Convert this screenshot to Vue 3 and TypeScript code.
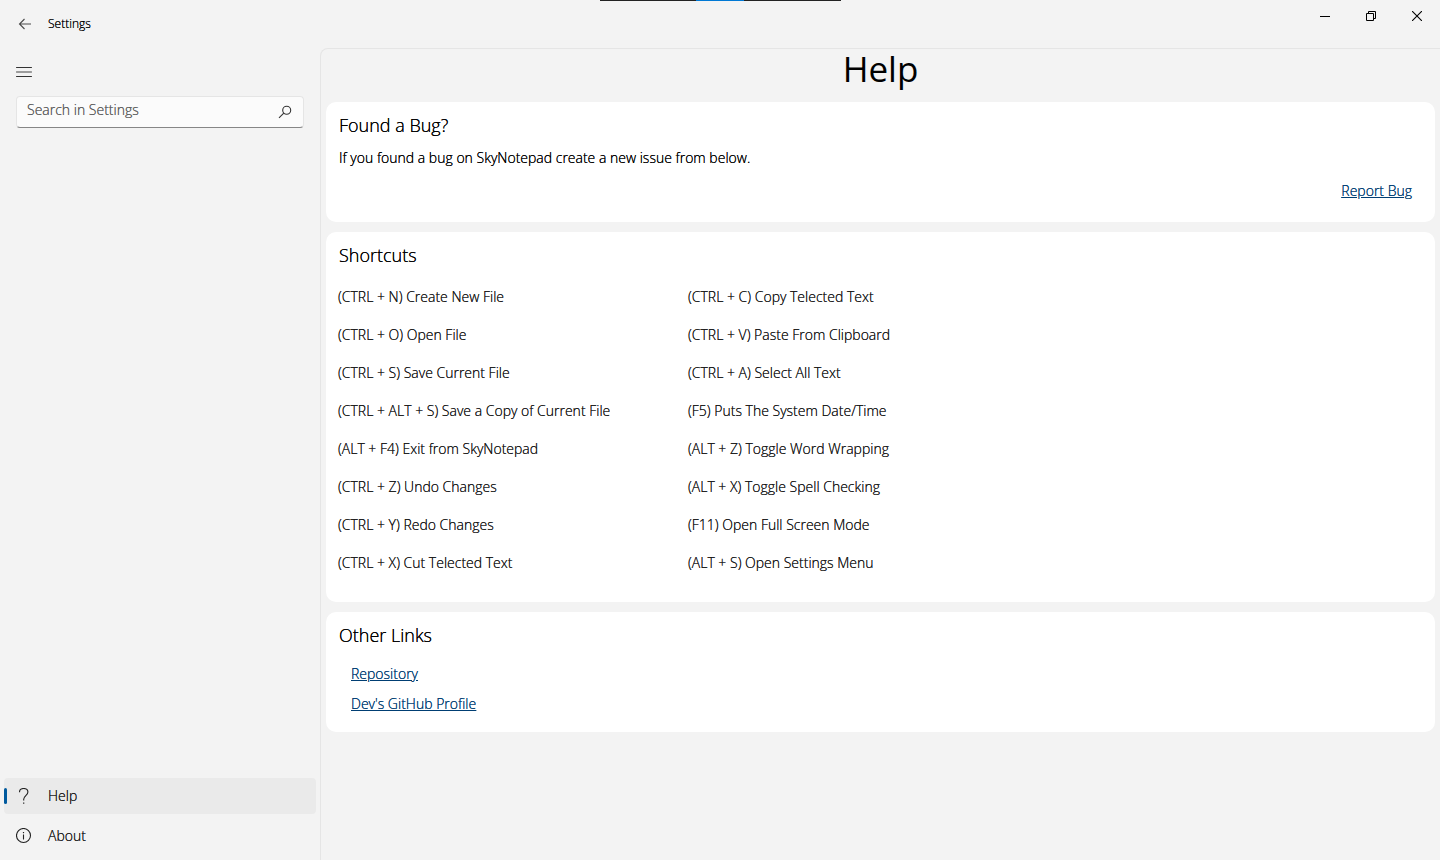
<script setup lang="ts">
import { ref } from 'vue'

const query = ref<string>('')

const leftShortcuts: string[] = [
  '(CTRL + N) Create New File',
  '(CTRL + O) Open File',
  '(CTRL + S) Save Current File',
  '(CTRL + ALT + S) Save a Copy of Current File',
  '(ALT + F4) Exit from SkyNotepad',
  '(CTRL + Z) Undo Changes',
  '(CTRL + Y) Redo Changes',
  '(CTRL + X) Cut Telected Text',
]

const rightShortcuts: string[] = [
  '(CTRL + C) Copy Telected Text',
  '(CTRL + V) Paste From Clipboard',
  '(CTRL + A) Select All Text',
  '(F5) Puts The System Date/Time',
  '(ALT + Z) Toggle Word Wrapping',
  '(ALT + X) Toggle Spell Checking',
  '(F11) Open Full Screen Mode',
  '(ALT + S) Open Settings Menu',
]

const links: string[] = ['Repository', "Dev's GitHub Profile"]
</script>

<template>
  <div class="window">
    <div class="drag-handle"><span class="drag-accent"></span></div>

    <header class="titlebar">
      <button class="back" type="button" aria-label="Back">
        <svg width="14" height="12" viewBox="0 0 14 12" fill="none" stroke="#4a4a4a" stroke-width="1.1">
          <path d="M13 6H1.5M6.5 1L1.5 6l5 5" />
        </svg>
      </button>
      <span class="app-title">Settings</span>
      <div class="controls">
        <button type="button" aria-label="Minimize">
          <svg width="10" height="10" viewBox="0 0 10 10"><path d="M0 5h10v1H0z" fill="#000" /></svg>
        </button>
        <button type="button" aria-label="Restore">
          <svg width="10" height="10" viewBox="0 0 10 10" fill="none" stroke="#000">
            <path d="M.5 2.5h7v7h-7zM2.5 2.5v-2h7v7h-2" />
          </svg>
        </button>
        <button type="button" aria-label="Close">
          <svg width="10" height="10" viewBox="0 0 10 10" fill="none" stroke="#000" stroke-width="1.1">
            <path d="M0 0l10 10M10 0L0 10" />
          </svg>
        </button>
      </div>
    </header>

    <div class="body">
      <aside class="sidebar">
        <button class="menu" type="button" aria-label="Toggle navigation">
          <svg width="16" height="12" viewBox="0 0 16 12" fill="none" stroke-linecap="round">
            <path d="M.5 1.5h15M.5 10.5h15" stroke="#333" />
            <path d="M.5 6h15" stroke="#444" />
          </svg>
        </button>
        <div class="search">
          <input v-model="query" type="text" placeholder="Search in Settings" aria-label="Search in Settings" />
          <button type="button" aria-label="Search">
            <svg width="14" height="14" viewBox="0 0 14 14" fill="none" stroke="#333" stroke-width="1.1">
              <circle cx="8.7" cy="5.2" r="4" />
              <path d="M5.8 8.1L1 12.9" />
            </svg>
          </button>
        </div>
        <nav class="nav">
          <button class="nav-item active" type="button" aria-current="page">
            <svg width="16" height="16" viewBox="0 0 16 16" fill="none" stroke="#222" stroke-width="1.1">
              <path d="M3.500 4.200C3.500 1.800 5.200.5 7.700.5s4.200 1.400 4.200 3.500c0 3.200-4.200 4-4.200 7.200v1.300" />
              <path d="M7.100 14.500h1.200v1.300H7.100z" fill="#222" stroke="none" />
            </svg>
            <span>Help</span>
          </button>
          <button class="nav-item" type="button">
            <svg width="16" height="16" viewBox="0 0 16 16" fill="none" stroke="#222" stroke-width="1.1">
              <circle cx="7.500" cy="7.500" r="7" />
              <path d="M7.500 6.500v5" />
              <path d="M6.900 4h1.200v1.200H6.900z" fill="#222" stroke="none" />
            </svg>
            <span>About</span>
          </button>
        </nav>
      </aside>

      <main class="content">
        <h1>Help</h1>

        <section class="card">
          <h2>Found a Bug?</h2>
          <p>If you found a bug on SkyNotepad create a new issue from below.</p>
          <div class="report"><a href="#">Report Bug</a></div>
        </section>

        <section class="card">
          <h2>Shortcuts</h2>
          <div class="columns">
            <ul>
              <li v-for="item in leftShortcuts" :key="item">{{ item }}</li>
            </ul>
            <ul>
              <li v-for="item in rightShortcuts" :key="item">{{ item }}</li>
            </ul>
          </div>
        </section>

        <section class="card">
          <h2>Other Links</h2>
          <ul class="links">
            <li v-for="item in links" :key="item"><a href="#">{{ item }}</a></li>
          </ul>
        </section>
      </main>
    </div>
  </div>
</template>

<style>
body {
  margin: 0;
  background: #f3f3f3;
}
</style>

<style scoped>
.window {
  position: relative;
  display: flex;
  flex-direction: column;
  min-height: 100vh;
  background: #f3f3f3;
  color: #000;
  font-family: "Segoe UI", "Open Sans", "Noto Sans", sans-serif;
  font-size: 14px;
  font-weight: 350;
  line-height: 20px;
  /* Firms up the thin strokes of the light face. */
  text-shadow: 0 0 0 currentColor;
}

button {
  display: flex;
  align-items: center;
  justify-content: center;
  padding: 0;
  border: 0;
  background: none;
  color: inherit;
  font: inherit;
  text-shadow: inherit;
}

ul {
  margin: 0;
  padding: 0;
  list-style: none;
}

.drag-handle {
  position: absolute;
  top: 0;
  left: 50%;
  display: flex;
  width: 241px;
  height: 1px;
  margin-left: -120px;
  background: #222;
}

.drag-accent {
  width: 48px;
  margin-left: 96px;
  background: #0078d4;
}

.titlebar {
  display: flex;
  align-items: center;
  height: 48px;
}

.back {
  width: 42px;
  height: 40px;
  margin-left: 4px;
}

.app-title {
  margin-left: 2px;
  font-size: 12px;
  line-height: 16px;
}

.controls {
  display: flex;
  align-self: flex-start;
  margin-left: auto;
}

.controls button {
  width: 46px;
  height: 32px;
}

.body {
  display: flex;
  flex: 1;
}

.sidebar {
  display: flex;
  flex-direction: column;
  flex: 0 0 320px;
}

.menu {
  width: 40px;
  height: 40px;
  margin: 4px 4px;
}

.search {
  box-sizing: border-box;
  display: flex;
  height: 32px;
  margin: 0 16px;
  border: 1px solid #e5e5e5;
  border-bottom-color: #868686;
  border-radius: 4px;
  background: #fbfbfb;
}

.search input {
  flex: 1;
  min-width: 0;
  padding: 0 0 4px 10px;
  border: 0;
  outline: 0;
  background: none;
  color: #1b1b1b;
  font: inherit;
}

.search input::placeholder {
  color: #606060;
  opacity: 1;
  text-shadow: 0 0 0 currentColor;
}

.search button {
  width: 36px;
}

.nav {
  display: flex;
  flex-direction: column;
  gap: 4px;
  margin: auto 4px 6px;
}

.nav-item {
  position: relative;
  justify-content: flex-start;
  gap: 16px;
  height: 36px;
  padding-left: 12px;
  border-radius: 4px;
  color: #1b1b1b;
}

.nav-item.active {
  background: #eaeaea;
}

.nav-item.active::before {
  content: "";
  position: absolute;
  top: 10px;
  left: 0;
  width: 3px;
  height: 16px;
  border-radius: 2px;
  background: #005a9e;
}

.content {
  display: flex;
  flex-direction: column;
  flex: 1;
  gap: 10px;
  min-width: 0;
  padding: 0 5px 10px;
  border: 1px solid #e5e5e5;
  border-width: 1px 0 0 1px;
  border-top-left-radius: 8px;
}

h1 {
  margin: 0;
  padding-bottom: 3px;
  font-size: 35px;
  font-weight: 400;
  line-height: 40px;
  text-align: center;
  text-shadow: none;
}

.card {
  padding: 12px 12px 8px;
  border-radius: 10px;
  background: #fff;
}

h2 {
  margin: 0 1px 2px;
  font-size: 18px;
  font-weight: inherit;
  line-height: 22px;
}

p {
  margin: 12px 1px 0;
}

.report {
  padding: 13px 11px 13px 0;
  text-align: right;
}

a {
  color: #003e73;
  text-decoration: underline;
}

.columns {
  display: grid;
  grid-template-columns: 350px 1fr;
  padding: 10px 0 12px;
  color: #1b1b1b;
}

.columns li {
  line-height: 38px;
}

.links {
  padding: 11px 13px 5px;
}

.links li {
  line-height: 30px;
}
</style>
